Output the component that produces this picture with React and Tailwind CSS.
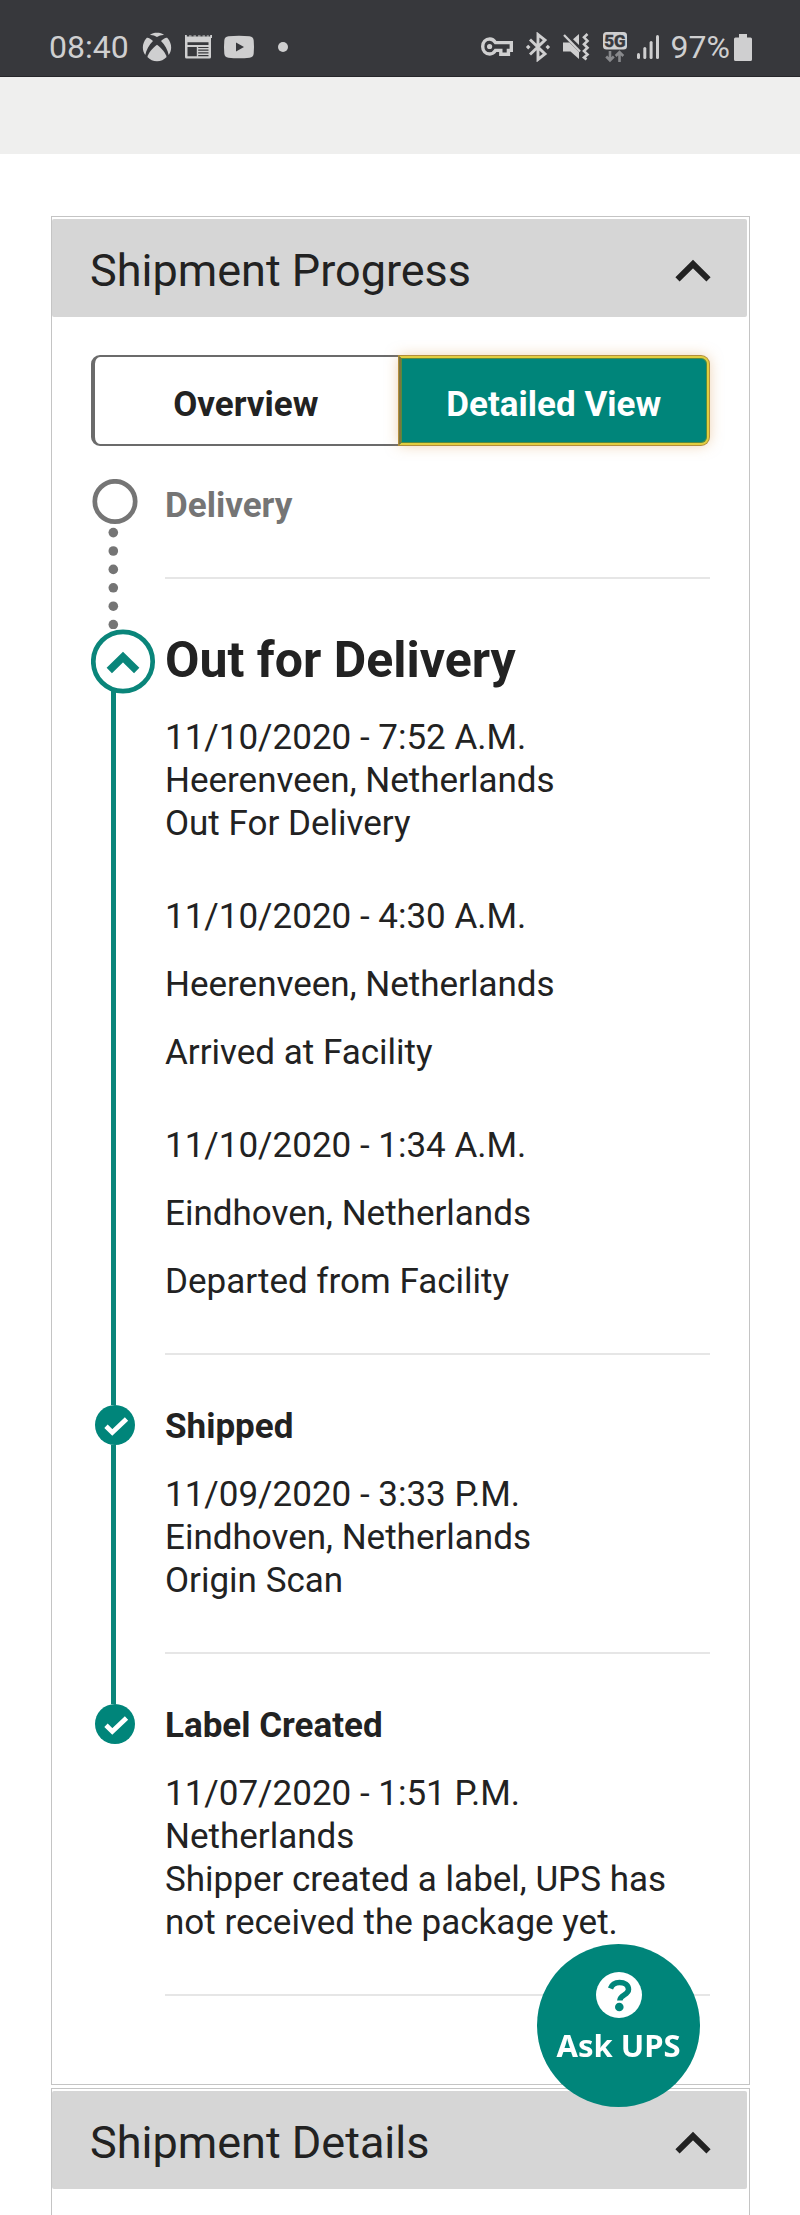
import React, { useState } from "react";

function StatusBar() {
  return (
    <header className="flex h-[77px] items-center justify-between border-b border-[#26262a] bg-[#37383c] pt-[18px] pr-[48px] pl-[49px] text-[32px] leading-none text-[#cfcfd0]">
      <div className="flex items-center">
        <time>08:40</time>
        <svg className="ml-[13px]" width="30" height="30" viewBox="0 0 30 30" fill="currentColor" aria-label="Game">
          <path d="M7.6 3.2C9.8 1.4 12.3.8 15 .8s5.2.6 7.4 2.4C20 2.700 17.500 3.600 15 5 12.500 3.600 10 2.700 7.600 3.200Z" />
          <path d="M4.400 6.200C5.600 5 8.500 6.600 11 9 7.200 12.800 4.200 18 3.300 23 -.4 18 .2 11 4.400 6.200Z" />
          <path d="M25.600 6.200C24.400 5 21.500 6.600 19 9 22.800 12.800 25.800 18 26.700 23 30.400 18 29.800 11 25.600 6.200Z" />
          <path d="M15 12.800C19.500 16.200 23.400 20.500 24.600 25 22 27.800 18.800 29.200 15 29.200S8 27.800 5.400 25C6.600 20.500 10.500 16.200 15 12.800Z" />
        </svg>
        <svg className="ml-[12px]" width="28" height="26" viewBox="0 0 28 26" fill="currentColor" aria-label="News">
          <path fillRule="evenodd" d="M1 2.500h26V23a1.500 1.500 0 0 1-1.500 1.500h-23A1.500 1.500 0 0 1 1 23ZM3.500 8.300v2.600h21V8.300Zm0 4.600v9.400h9.300v-9.400Zm10.700 0v1.200h10.300v-1.200Zm0 2.700v1.200h10.300v-1.200Zm0 2.700v1.200h10.300v-1.200Zm0 2.700v1.200h10.300V21Z" />
          <path d="M1 1h1.800v3H1Zm25.200 0H28v3h-1.800ZM5 2.600h2.500v-1H5Zm4.500 0H12v-1H9.500Zm4.500 0h2.500v-1H14Zm4.500 0H21v-1h-2.500Zm4.300 0h2v-1h-2Z" />
        </svg>
        <svg className="ml-[11px]" width="32" height="24" viewBox="0 0 32 24" fill="currentColor" aria-label="Video">
          <path fillRule="evenodd" d="M5.500 1.300C12 .6 20 .6 26.500 1.300c2.600.3 4 1.700 4.200 4.200.4 4.300.4 8.700 0 13-.2 2.500-1.600 3.900-4.200 4.200-6.500.7-14.500.7-21 0-2.600-.3-4-1.700-4.200-4.200-.4-4.300-.4-8.700 0-13 .2-2.500 1.600-3.900 4.200-4.200ZM13 7.600v8.800l8-4.400Z" />
        </svg>
        <span className="ml-[23px] size-[10px] rounded-full bg-current" />
      </div>
      <div className="flex items-center">
        <svg width="34" height="22" viewBox="0 0 34 22" fill="none" stroke="currentColor" aria-label="VPN">
          <path strokeWidth="3.400" strokeLinejoin="miter" d="M15.500 6.600C14 4.200 12 3 9.800 3 5.500 3 2.700 6.300 2.700 10.500S5.500 18 9.800 18c2.200 0 4.200-1.200 5.700-3.600h5.300v3.900h7.600v-3.900h2.900V6.600Z" />
          <circle cx="9.600" cy="10.500" r="2.600" fill="currentColor" stroke="none" />
        </svg>
        <svg className="ml-[11px]" width="26" height="30" viewBox="0 0 26 30" fill="none" stroke="currentColor" aria-label="Bluetooth">
          <path strokeWidth="2.900" d="m5 7.500 15 14.500-7 5.500V2.500L20 8 5 22.500" />
          <path fill="currentColor" stroke="none" d="m3.200 12.800 2.300 2.300-2.300 2.300L.9 15.100Zm19.600 0 2.300 2.300-2.300 2.300-2.300-2.300Z" />
        </svg>
        <svg className="ml-[11px]" width="28" height="30" viewBox="0 0 28 30" fill="none" stroke="currentColor" aria-label="Vibrate">
          <path fill="currentColor" stroke="none" d="M1 10.500h6.500L17 20v7l-8.500-7.500H1ZM11 7.300 17 2v11Z" />
          <path strokeWidth="2.300" d="m2 3 16 16.500" />
          <path strokeWidth="2.600" d="M25.500 2 22 5.300l3.500 3.600-3.500 3.400 3.500 3.400-3.500 3.400 3.500 3.300-3.500 3 2.500 2" />
        </svg>
        <svg className="ml-[12px]" width="26" height="32" viewBox="0 0 26 32" aria-label="5G">
          <rect x="1" y="1" width="24" height="17.500" rx="3.500" fill="currentColor" />
          <text x="13" y="15.900" textAnchor="middle" fontSize="17" fontWeight="800" fill="#37383c" stroke="#37383c" strokeWidth="0.500">5G</text>
          <path d="M8 20v9M4.200 25.500 8 29.300l3.800-3.800M17.500 31v-9M13.700 25l3.800-3.800 3.800 3.800" fill="none" stroke="#88898c" strokeWidth="2.600" />
        </svg>
        <svg className="ml-[8px]" width="24" height="26" viewBox="0 0 24 26" fill="currentColor" aria-label="Signal">
          <rect x="1" y="19" width="3" height="6" rx="1.500" />
          <rect x="7.300" y="13" width="3" height="12" rx="1.500" />
          <rect x="13.600" y="7" width="3" height="18" rx="1.500" />
          <rect x="20" y="1" width="3" height="24" rx="1.500" />
        </svg>
        <span className="ml-[11px]">97%</span>
        <svg className="ml-[4px]" width="18" height="28" viewBox="0 0 18 28" fill="currentColor" aria-label="Battery">
          <path d="M5 1h8v3.500h3.500A1.500 1.500 0 0 1 18 6v20.500a1.500 1.500 0 0 1-1.500 1.500h-15A1.500 1.500 0 0 1 0 26.500V6a1.500 1.500 0 0 1 1.500-1.500H5Z" />
        </svg>
      </div>
    </header>
  );
}

function Panel({ title, className = "", children }) {
  return (
    <section className={`border border-[#c4c4c4] bg-white pt-[2px] ${className}`}>
      <h2 className="mr-[2px]">
        <button className="flex h-[98px] w-full items-center justify-between rounded-[2px] bg-[#d6d6d6] pt-[6px] pr-[35px] pl-[38px] text-left text-[45px] leading-[54px]">
          {title}
          <svg width="38" height="24" viewBox="0 0 38 24" fill="none" stroke="#222" aria-hidden="true">
            <path d="M3.500 20.300 19 5l15.500 15.300" strokeWidth="6" />
          </svg>
        </button>
      </h2>
      {children}
    </section>
  );
}

function ViewTabs() {
  const [view, setView] = useState("detailed");
  const on = "z-10 bg-[#00857a] text-white border-[#e2cd40] shadow-[0_0_14px_rgba(222,160,90,0.5),0_0_0_1px_#a98a34,inset_0_0_0_1px_#5a8a3c]";
  const off = "bg-white border-[#6b6b6b]";
  return (
    <div className="grid h-[91px] grid-cols-2 text-[35px] font-bold">
      <button onClick={() => setView("overview")} className={`rounded-l-[9px] border-2 border-l-4 pt-[9px] pr-[2px] ${view === "overview" ? on : off}`}>
        Overview
      </button>
      <button onClick={() => setView("detailed")} className={`my-px mr-px -ml-[2px] rounded-r-[8px] border-2 pt-[9px] ${view === "detailed" ? on + " border-l-[#7c7440]" : off}`}>
        Detailed View
      </button>
    </div>
  );
}

const PendingMarker = () => (
  <>
    <svg className="ml-px block shrink-0" width="46" height="46" viewBox="0 0 46 46" aria-hidden="true">
      <circle cx="23" cy="22.500" r="20.200" fill="none" stroke="#757575" strokeWidth="4.700" />
    </svg>
    <svg className="block min-h-0 w-[45px] flex-1" viewBox="0 0 45 103" preserveAspectRatio="xMinYMin meet" fill="#757575" aria-hidden="true">
      {[0, 1, 2, 3, 4, 5].map((n) => (
        <circle key={n} cx="22.300" cy={7.600 + n * 18.400} r="4.800" />
      ))}
    </svg>
  </>
);

const Line = () => <span className="ml-[20px] w-[5px] flex-1 bg-[#0a857a]" />;

const ActiveMarker = () => (
  <>
    <svg className="block shrink-0" width="65" height="65" viewBox="0 0 65 65" fill="none" stroke="#0a857a" aria-hidden="true">
      <path d="M22.500 55v10" strokeWidth="5" />
      <circle cx="32" cy="32.500" r="29.700" fill="#fff" strokeWidth="4.700" />
      <path d="M18.300 41.500 32 28l13.700 13.500" strokeWidth="7.600" />
    </svg>
    <Line />
  </>
);

const DoneMarker = ({ last }) => (
  <>
    <svg className="ml-[4px] block shrink-0" width="40" height="40" viewBox="0 0 40 40" aria-hidden="true">
      <circle cx="20" cy="20" r="20" fill="#00857a" />
      <path d="m11 21.300 6.300 6.200L31.500 14" fill="none" stroke="#fff" strokeWidth="4.800" />
    </svg>
    {!last && <Line />}
  </>
);

function Step({ marker, title, large, muted, last, events = [] }) {
  return (
    <li className="flex">
      <div className="flex w-[74px] shrink-0 flex-col items-start">{marker}</div>
      <div className={`min-w-0 flex-1 ${muted ? "pt-[5px]" : ""}`}>
        <h3 className={`font-bold ${large ? "text-[50px] leading-[62px]" : "text-[35px] leading-[43px]"} ${muted ? "text-[#757575]" : ""}`}>
          {title}
        </h3>
        {events.map((event, i) => (
          <div key={event.lines[0]} className={`flex flex-col ${i > 0 ? "mt-[50px]" : "mt-[25px]"} ${event.spaced ? "gap-[25px]" : ""}`}>
            {event.lines.map((line) => (
              <p key={line}>{line}</p>
            ))}
          </div>
        ))}
        <hr className={`mt-[50px] border-t-2 border-[#e6e6e6] ${last ? "" : "mb-[50px]"}`} />
      </div>
    </li>
  );
}

export default function App() {
  return (
    <div className="flex min-h-screen flex-col bg-white font-['Roboto',sans-serif] text-[#222222]">
      <StatusBar />
      <div className="h-[77px] bg-[#efefee]" />
      <main className="flex flex-1 flex-col gap-[3px] pt-[62px] pr-[50px] pl-[51px]">
        <Panel title="Shipment Progress">
          <div className="pt-[38px] pr-[39px] pb-[88px] pl-[39px]">
            <ViewTabs />
            <ol className="mt-[33px] text-[35px] leading-[43px]">
              <Step marker={<PendingMarker />} title="Delivery" muted />
              <Step
                marker={<ActiveMarker />}
                title="Out for Delivery"
                large
                events={[
                  { lines: ["11/10/2020 - 7:52 A.M.", "Heerenveen, Netherlands", "Out For Delivery"] },
                  { lines: ["11/10/2020 - 4:30 A.M.", "Heerenveen, Netherlands", "Arrived at Facility"], spaced: true },
                  { lines: ["11/10/2020 - 1:34 A.M.", "Eindhoven, Netherlands", "Departed from Facility"], spaced: true },
                ]}
              />
              <Step
                marker={<DoneMarker />}
                title="Shipped"
                events={[{ lines: ["11/09/2020 - 3:33 P.M.", "Eindhoven, Netherlands", "Origin Scan"] }]}
              />
              <Step
                marker={<DoneMarker last />}
                title="Label Created"
                last
                events={[
                  { lines: ["11/07/2020 - 1:51 P.M.", "Netherlands", "Shipper created a label, UPS has not received the package yet."] },
                ]}
              />
            </ol>
          </div>
        </Panel>
        <Panel title="Shipment Details" className="flex-1 border-b-0" />
      </main>
      <button className="fixed right-[100px] bottom-[108px] z-20 flex size-[163px] flex-col items-center rounded-full bg-[#00857a] pt-[28px] font-['Noto_Sans',sans-serif] text-[31px] leading-[42px] font-bold text-white">
        <svg width="46" height="46" viewBox="0 0 46 46" aria-hidden="true">
          <circle cx="23" cy="23" r="23" fill="#fff" />
          <path d="M14.500 16.500c1.500-4 4.800-6 9-6 5 0 9 2.500 9 7 0 5.500-8.700 5.500-8.700 11" fill="none" stroke="#00857a" strokeWidth="5.500" />
          <circle cx="23.300" cy="35" r="4.300" fill="#00857a" />
        </svg>
        <span className="mt-[6px]">Ask UPS</span>
      </button>
    </div>
  );
}
